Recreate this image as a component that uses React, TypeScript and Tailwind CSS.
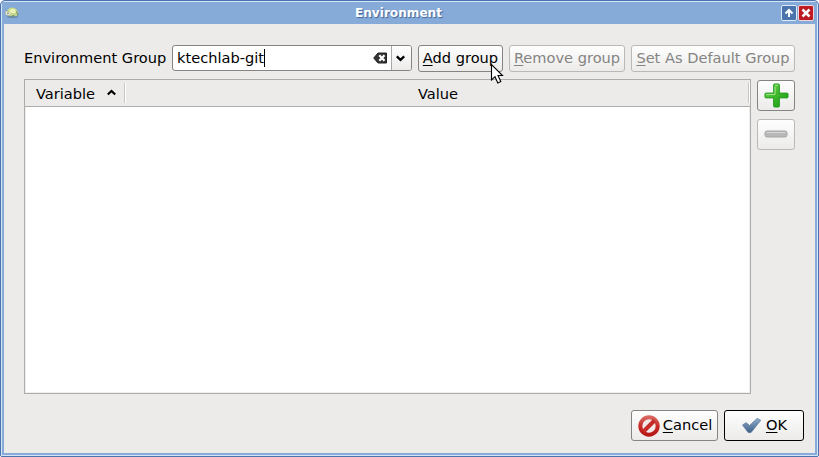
import type { ReactNode } from "react";

const buttonBase =
  "flex items-center justify-center rounded-[3px] border bg-linear-to-b from-[#fefefe] to-[#ecebea] shrink-0 whitespace-pre";

function Mnemonic({ text }: { text: string }) {
  return (
    <span className="pb-[2px] leading-[22px]">
      <span className="underline decoration-1 underline-offset-[2px] [text-decoration-skip-ink:none]">{text[0]}</span>
      {text.slice(1)}
    </span>
  );
}

function Button({ className, children }: { className: string; children: ReactNode }) {
  return <button className={`${buttonBase} ${className}`}>{children}</button>;
}

function TitleBar() {
  return (
    <header className="flex h-[22px] shrink-0 items-center bg-[#86abd9] pr-[3px] pl-[2px]">
      <svg width="16" height="16" viewBox="0 0 16 16" className="-mt-px">
        <ellipse cx="8.5" cy="11.5" rx="5.5" ry="1.5" fill="#5f7f9f" opacity=".7" />
        <path d="M3 6.5Q4 2.5 9 2.5Q14 3.5 14 9.5L12 11.5L10 10.5L8 11.5L5 10.5Z" fill="#c3d68c" />
        <path d="M5 5.5Q8 2.5 11 4.5L12 7.5L8 8.5Z" fill="#e9f3b4" />
        <path d="M1.5 6.5L5 6.5L7 8.5L5 10.5L1.5 9.5Z" fill="#eeefd7" stroke="#a9b58b" strokeWidth=".5" />
        <circle cx="4" cy="8.3" r=".8" fill="#566548" />
        <path d="M12.5 6.5L14 10.5M7 11.5L10 10.5" stroke="#71885b" />
      </svg>
      <h1 className="flex-1 pr-[4px] text-center font-['DejaVu_Sans',sans-serif] text-[12.1px] leading-[20px] font-bold text-white [text-shadow:1px_1px_1px_#3d659b]">
        Environment
      </h1>
      <div className="flex gap-px">
        <button className="flex h-4 w-4 items-center justify-center rounded-[2px] border border-[#dceafa] bg-[#4a74ab]">
          <svg width="10" height="10" viewBox="0 0 10 10" fill="none" stroke="white" strokeWidth="2">
            <path d="M5 9V2M1.5 5.5L5 2L8.5 5.5" />
          </svg>
        </button>
        <button className="flex h-4 w-4 items-center justify-center rounded-[2px] border border-[#eed5dc] bg-[#bd1a21]">
          <svg width="10" height="10" viewBox="0 0 10 10" stroke="white" strokeWidth="2.5">
            <path d="M1.5 1.5L8.5 8.5M8.5 1.5L1.5 8.5" />
          </svg>
        </button>
      </div>
    </header>
  );
}

function GroupSelector() {
  return (
    <div className="flex h-[27px] items-start">
      <label className="w-[148px] shrink-0 leading-[26px] whitespace-nowrap">Environment Group</label>
      <div className="flex h-[26px] w-[240px] shrink-0 overflow-hidden rounded-[3px] border border-[#858482] bg-white">
        <div className="flex flex-1 items-center pl-1">
          <span className="leading-[24px]">ktechlab-git</span>
          <span className="h-[18px] w-px bg-black" />
        </div>
        <svg width="15" height="12" viewBox="0 0 15 12" className="mt-[6px] mr-[3px]">
          <path d="M.7 6L5 1H13.5V11H5Z" fill="#333" stroke="#222" strokeLinejoin="round" />
          <path d="M6.3 3.3L11.5 8.7M11.5 3.3L6.3 8.7" stroke="white" strokeWidth="2.2" />
        </svg>
        <div className="flex w-[20px] items-center justify-center border-l border-[#aaa9a7] bg-linear-to-b from-[#fefefe] to-[#ecebea]">
          <svg width="9" height="7" viewBox="0 0 9 7" fill="none" stroke="black" strokeWidth="2.3" className="mt-px -ml-[3px]">
            <path d="M.8 1.3L4.5 4.8L8.2 1.3" />
          </svg>
        </div>
      </div>
      <div className="relative ml-[6px] shrink-0">
        <Button className="h-[27px] w-[85px] border-[#858482]">
          <Mnemonic text="Add group" />
        </Button>
        <svg width="14" height="22" viewBox="0 0 14 22" className="absolute top-[18px] left-[72px] z-10">
          <path d="M1.5 1.5V17L5 13.7L7.8 20L10.8 18.6L8 12.5H12.5Z" fill="white" stroke="black" strokeWidth="1.1" />
        </svg>
      </div>
      <Button className="ml-[6px] h-[27px] w-[116px] border-[#bbb9b7] text-[#858482]">
        <Mnemonic text="Remove group" />
      </Button>
      <Button className="ml-[6px] h-[27px] w-[164px] border-[#bbb9b7] text-[#858482]">
        <Mnemonic text="Set As Default Group" />
      </Button>
    </div>
  );
}

function VariableTable() {
  return (
    <section className="flex h-[315px] w-[727px] shrink-0 flex-col border border-[#adacaa] bg-white">
      <div className="flex h-[27px] items-center border-b border-[#adacaa] bg-[#ecebea]">
        <div className="flex w-[99px] items-center pl-[11px]">
          <span className="pt-[2px] leading-[24px]">Variable</span>
          <svg width="9" height="7" viewBox="0 0 9 7" fill="none" stroke="black" strokeWidth="2.2" className="mt-[-2px] ml-[12px]">
            <path d="M.8 5.5L4.5 2L8.2 5.5" />
          </svg>
        </div>
        <div className="h-[20px] w-[2px] border-l border-[#c7c6c4] bg-white" />
        <div className="flex-1 pt-[2px] pl-[2px] text-center leading-[24px]">Value</div>
        <div className="h-[20px] w-[2px] border-l border-[#c7c6c4] bg-white" />
      </div>
      <div className="flex-1 border border-t-0 border-[#f0efee]" />
    </section>
  );
}

export default function App() {
  return (
    <div className="h-[457px] w-[819px] bg-white">
      <div className="h-full rounded-t-[5px] rounded-b-[2px] border border-[#4a74ab] bg-[#86abd9]">
        <div className="flex h-full flex-col rounded-t-[4px] border border-[#d5e5f7]">
          <TitleBar />
          <main className="mx-[2px] mb-[2px] flex-1 bg-[#ecebea] pt-[21px] pl-[20px] font-['DejaVu_Sans',sans-serif] text-[14.6px] text-black">
            <GroupSelector />
            <div className="mt-[7px] flex">
              <VariableTable />
              <div className="ml-[6px] flex flex-col gap-[8px] pt-px">
                <Button className="h-[31px] w-[38px] border-[#858482]">
                  <svg width="25" height="25" viewBox="0 0 26 26" className="-mt-px">
                    <defs>
                      <linearGradient id="plus" x1="0" y1="0" x2="1" y2="1">
                        <stop offset="0" stopColor="#72d85b" />
                        <stop offset=".5" stopColor="#3db62b" />
                        <stop offset="1" stopColor="#159a13" />
                      </linearGradient>
                    </defs>
                    <path d="M11 1H15Q16 1 16 2V10.5H24Q25 10.5 25 11.5V14.5Q25 15.5 24 15.5H16V24Q16 25 15 25H11Q10 25 10 24V15.5H2Q1 15.5 1 14.5V11.5Q1 10.5 2 10.5H10V2Q10 1 11 1Z" fill="url(#plus)" stroke="#279b20" />
                    <path d="M11.5 2.5H14.5M2.5 12H11.5V4" fill="none" stroke="#aae78d" />
                  </svg>
                </Button>
                <Button className="h-[31px] w-[38px] border-[#bbb9b7]">
                  <svg width="24" height="8" viewBox="0 0 24 8" className="-mt-px">
                    <rect x="1" y="1" width="22" height="6" rx="2" fill="#b8b8b8" stroke="#a5a5a5" />
                    <path d="M2.5 2.5H21.5" stroke="#d8d8d8" />
                  </svg>
                </Button>
              </div>
            </div>
            <footer className="mt-[16px] flex justify-end gap-[6px] pr-[11px]">
              <Button className="h-[31px] w-[87px] gap-[3px] border-[#858482] pl-px">
                <svg width="22" height="22" viewBox="0 0 22 22">
                  <defs>
                    <linearGradient id="cancel" x1="0" y1="0" x2="0" y2="1">
                      <stop stopColor="#d9655f" />
                      <stop offset=".5" stopColor="#c72c28" />
                      <stop offset="1" stopColor="#b71916" />
                    </linearGradient>
                  </defs>
                  <circle cx="11" cy="11" r="8.7" fill="#f3e9e8" stroke="url(#cancel)" strokeWidth="4" />
                  <path d="M5.5 16.5L16.5 5.5" stroke="#c72b27" strokeWidth="4" />
                </svg>
                <Mnemonic text="Cancel" />
              </Button>
              <Button className="h-[31px] w-[80px] gap-[4px] border-black">
                <svg width="21" height="17" viewBox="0 0 21 18">
                  <defs>
                    <linearGradient id="ok" x1="0" y1="0" x2="0" y2="1">
                      <stop stopColor="#8faccb" />
                      <stop offset="1" stopColor="#3e6088" />
                    </linearGradient>
                  </defs>
                  <path d="M1 8.5L4.8 6L8.5 9L16.5 1.5L20.3 3.5L10 16.5H7Z" fill="url(#ok)" stroke="#587698" strokeWidth=".8" strokeLinejoin="round" />
                </svg>
                <Mnemonic text="OK" />
              </Button>
            </footer>
          </main>
        </div>
      </div>
    </div>
  );
}
